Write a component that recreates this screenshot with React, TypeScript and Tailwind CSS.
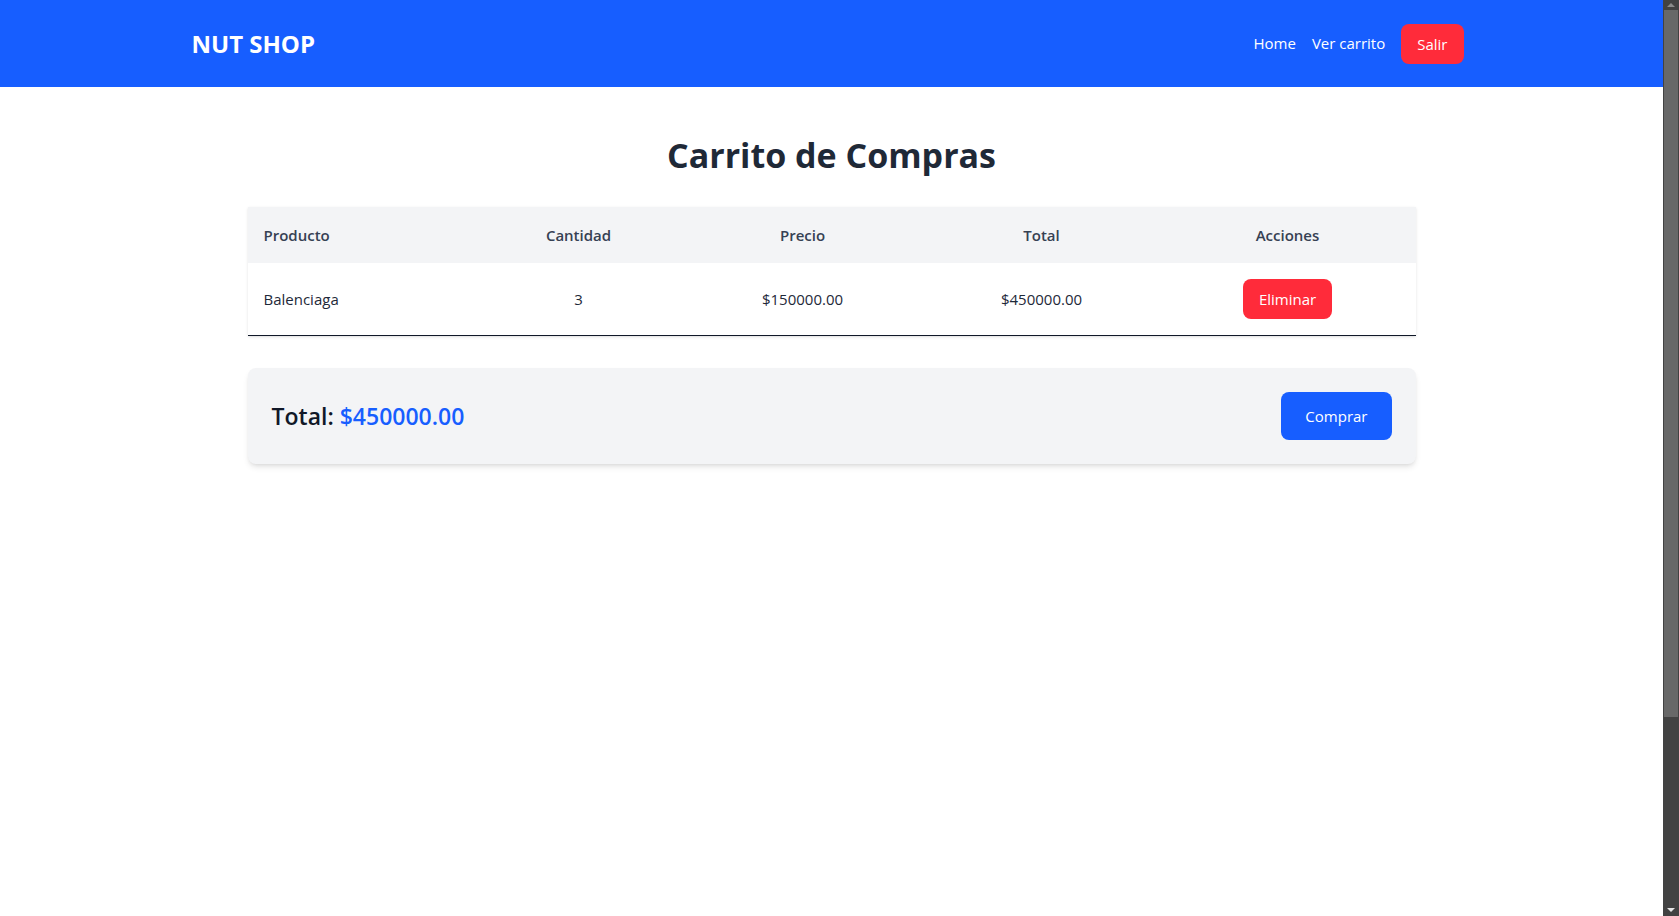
import React from "react";

const items = [
  { name: "Balenciaga", qty: 3, price: 150000 },
];

function Scrollbar() {
  return (
    <div className="w-4 shrink-0 h-full bg-[#424242] flex flex-col items-center">
      <div className="h-[10px] w-full flex items-center justify-center">
        <div className="w-0 h-0 border-x-[4px] border-x-transparent border-b-[4px] border-b-[#8a8a8a]" />
      </div>
      <div className="h-[707px] w-[14px] bg-[#686868]" />
      <div className="flex-1" />
      <div className="h-[12px] w-full flex items-center justify-center">
        <div className="w-0 h-0 border-x-[4px] border-x-transparent border-t-[4px] border-t-[#e5e5e5]" />
      </div>
    </div>
  );
}

export default function App() {
  const total = items.reduce((s, i) => s + i.qty * i.price, 0);

  return (
    <div
      className="h-screen flex bg-white text-gray-800 text-[15px]"
      style={{ fontFamily: '"Open Sans", "Noto Sans", sans-serif' }}
    >
      <div className="flex-1 min-w-0 overflow-hidden">
        <nav className="bg-[#175eff] h-[87px]">
          <div className="max-w-7xl mx-auto h-full flex items-center justify-between">
            <h1 className="text-2xl font-bold text-white">NUT SHOP</h1>
            <div className="flex items-center gap-4 mr-2 text-white text-[15px]">
              <a href="#">Home</a>
              <a href="#">Ver carrito</a>
              <button className="bg-[#ff2b3a] px-4 py-2 leading-6 rounded-lg">Salir</button>
            </div>
          </div>
        </nav>

        <main className="w-[1168px] mx-auto pt-12">
          <h2 className="text-[34px] leading-10 font-bold text-center text-[#1f2937] mb-8">
            Carrito de Compras
          </h2>

          <table className="w-full table-fixed shadow-sm">
            <thead className="bg-gray-100 text-gray-700">
              <tr>
                <th className="w-[228px] px-4 py-4 leading-6 text-left font-semibold">Producto</th>
                <th className="w-[206px] px-4 py-4 leading-6 font-semibold">Cantidad</th>
                <th className="w-[242px] px-4 py-4 leading-6 font-semibold">Precio</th>
                <th className="w-[236px] px-4 py-4 leading-6 font-semibold">Total</th>
                <th className="w-[256px] px-4 py-4 leading-6 font-semibold">Acciones</th>
              </tr>
            </thead>
            <tbody>
              {items.map((item) => (
                <tr key={item.name} className="border-b border-gray-900">
                  <td className="px-4 py-4">{item.name}</td>
                  <td className="px-4 py-4 text-center">{item.qty}</td>
                  <td className="px-4 py-4 text-center">${item.price.toFixed(2)}</td>
                  <td className="px-4 py-4 text-center">${(item.qty * item.price).toFixed(2)}</td>
                  <td className="px-4 py-4 text-center">
                    <button className="bg-[#ff2b3a] text-white px-4 py-2 leading-6 rounded-lg">
                      Eliminar
                    </button>
                  </td>
                </tr>
              ))}
            </tbody>
          </table>

          <div className="mt-8 bg-gray-100 rounded-lg shadow-md p-6 flex items-center justify-between">
            <p className="text-[23px] font-semibold text-gray-900">
              Total: <span className="text-[#175eff]">${total.toFixed(2)}</span>
            </p>
            <button className="bg-[#175eff] text-white px-6 py-3 leading-6 rounded-lg">
              Comprar
            </button>
          </div>
        </main>
      </div>
      <Scrollbar />
    </div>
  );
}
